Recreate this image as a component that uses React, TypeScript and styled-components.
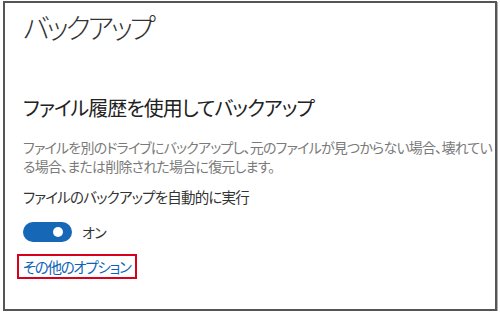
import { type FC, useState } from 'react'
import styled, { createGlobalStyle } from 'styled-components'

const GlobalStyle = createGlobalStyle`
    html, body {
        margin: 0;
        padding: 0;
        background: #ffffff;
    }

    body {
        font-family: "Noto Sans CJK JP", "Noto Sans", sans-serif;
        font-feature-settings: "palt";
    }
`

const Frame = styled.div`
    box-sizing: border-box;
    width: 494px;
    height: 310px;
    margin: 1px 0 0 3px;
    border: 2px solid #555555;
    box-shadow: 1px 1px 0 #b0b0b0;
    overflow: hidden;
    padding: 4px 0 0 18px;
    background: #ffffff;
`

const PageTitle = styled.h1`
    margin: 0;
    font-size: 28px;
    font-weight: 300;
    line-height: 40px;
    letter-spacing: -3px;
    color: #333333;
    white-space: nowrap;
`

const SectionTitle = styled.h2`
    margin: 47px 0 0;
    font-size: 20px;
    font-weight: 400;
    line-height: 28px;
    letter-spacing: -1px;
    color: #222222;
    white-space: nowrap;
`

const Description = styled.p`
    margin: 16px 0 0;
    font-size: 14px;
    line-height: 19px;
    letter-spacing: -0.8px;
    color: #7a7a7a;
    white-space: nowrap;
`

const Label = styled.div`
    margin-top: 11px;
    font-size: 14.5px;
    line-height: 20px;
    letter-spacing: -0.8px;
    color: #333333;
    white-space: nowrap;
`

const ToggleRow = styled.div`
    display: flex;
    align-items: center;
    gap: 10px;
    margin-top: 15px;
`

const Track = styled.button<{ $on: boolean }>`
    position: relative;
    width: 49px;
    height: 20px;
    padding: 0;
    border: none;
    border-radius: 10px;
    background: ${p => (p.$on ? '#1767b7' : '#999999')};
    cursor: pointer;

    &::after {
        content: '';
        position: absolute;
        top: 5px;
        left: ${p => (p.$on ? '30px' : '5px')};
        width: 10px;
        height: 10px;
        border-radius: 50%;
        background: #ffffff;
    }
`

const ToggleText = styled.span`
    font-size: 14px;
    line-height: 20px;
    letter-spacing: -0.5px;
    color: #333333;
`

const LinkBox = styled.div`
    display: inline-block;
    margin: 12px 0 0 -6px;
    padding: 0 4px 0 4px;
    border: 2px solid #d9001b;
`

const MoreLink = styled.a`
    display: block;
    font-size: 14.5px;
    line-height: 21px;
    letter-spacing: -1.3px;
    color: #0b63b8;
    text-decoration: none;
    white-space: nowrap;
`

const App: FC = () => {
    const [on, setOn] = useState(true)

    return (
        <>
            <GlobalStyle />
            <Frame>
                <PageTitle>バックアップ</PageTitle>
                <SectionTitle>ファイル履歴を使用してバックアップ</SectionTitle>
                <Description>
                    ファイルを別のドライブにバックアップし、元のファイルが見つからない場合、壊れてい
                    <br />
                    る場合、または削除された場合に復元します。
                </Description>
                <Label>ファイルのバックアップを自動的に実行</Label>
                <ToggleRow>
                    <Track $on={on} onClick={() => { setOn(!on) }} aria-label="toggle" />
                    <ToggleText>{on ? 'オン' : 'オフ'}</ToggleText>
                </ToggleRow>
                <LinkBox>
                    <MoreLink href="#">その他のオプション</MoreLink>
                </LinkBox>
            </Frame>
        </>
    )
}

export default App
